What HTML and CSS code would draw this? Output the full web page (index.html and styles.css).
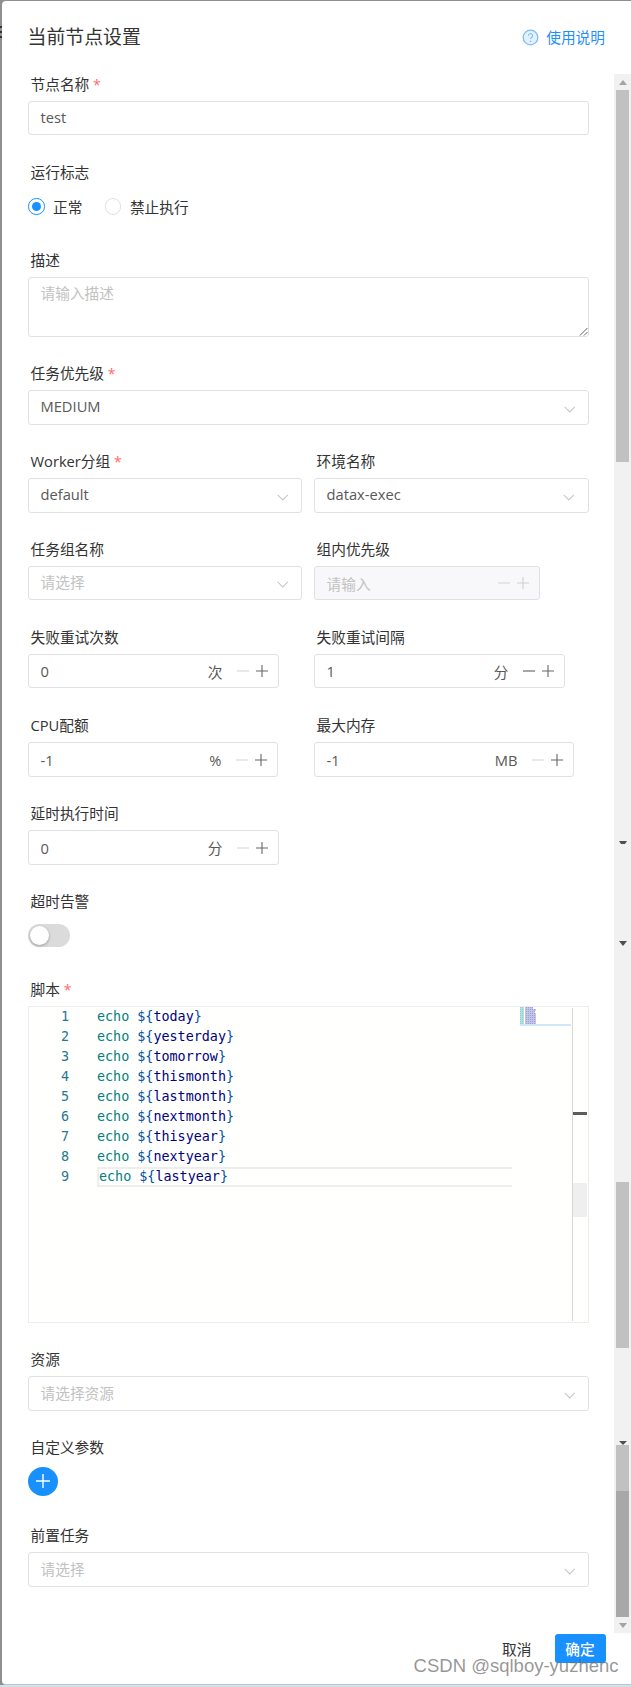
FILE: index.html
```html
<!DOCTYPE html>
<html lang="zh-CN">
<head>
<meta charset="utf-8">
<title>当前节点设置</title>
<link rel="stylesheet" href="styles.css">
</head>
<body>
<div class="backdrop">
  <div class="edge-marks"><span></span><span></span><span></span></div>
  <section class="dialog">
    <header class="head">
      <h1 class="title">当前节点设置</h1>
      <a class="help">
        <svg class="help-icon" viewBox="0 0 17 17"><circle cx="8.5" cy="8.5" r="7.3" fill="#e4f2ff" stroke="#7cbcfb" stroke-width="1.3"/><path d="M6.4 6.7a2.1 2.1 0 1 1 3.2 1.8c-.7.4-1.1.8-1.1 1.6" fill="none" stroke="#7cbcfb" stroke-width="1.1"/><circle cx="8.5" cy="12.3" r=".8" fill="#7cbcfb"/></svg>
        <span>使用说明</span>
      </a>
    </header>

    <form class="form">
      <div class="field">
        <div class="label">节点名称 <i class="star">*</i></div>
        <div class="box box-34 text-up value">test</div>
      </div>

      <div class="field">
        <div class="label">运行标志</div>
        <div class="radios">
          <span class="radio on"></span><span class="radio-text">正常</span>
          <span class="radio"></span><span class="radio-text">禁止执行</span>
        </div>
      </div>

      <div class="field">
        <div class="label">描述</div>
        <div class="box area placeholder">请输入描述
          <svg class="grip" viewBox="0 0 10 10"><path d="M1 9.5 9.5 1M5.5 9.5 9.5 5.5" stroke="#555" stroke-width="1" fill="none"/></svg>
        </div>
      </div>

      <div class="field">
        <div class="label">任务优先级 <i class="star">*</i></div>
        <div class="box select value">MEDIUM<svg class="chev" viewBox="0 0 12 7"><path d="M.7.7 6 6l5.3-5.3" fill="none" stroke="#c8c8c8" stroke-width="1.1"/></svg></div>
      </div>

      <div class="cols">
        <div class="field">
          <div class="label">Worker分组 <i class="star">*</i></div>
          <div class="box select value">default<svg class="chev" viewBox="0 0 12 7"><path d="M.7.7 6 6l5.3-5.3" fill="none" stroke="#c8c8c8" stroke-width="1.1"/></svg></div>
        </div>
        <div class="field">
          <div class="label">环境名称</div>
          <div class="box select value">datax-exec<svg class="chev" viewBox="0 0 12 7"><path d="M.7.7 6 6l5.3-5.3" fill="none" stroke="#c8c8c8" stroke-width="1.1"/></svg></div>
        </div>
      </div>

      <div class="cols">
        <div class="field">
          <div class="label">任务组名称</div>
          <div class="box select box-34 placeholder">请选择<svg class="chev" viewBox="0 0 12 7"><path d="M.7.7 6 6l5.3-5.3" fill="none" stroke="#c8c8c8" stroke-width="1.1"/></svg></div>
        </div>
        <div class="field">
          <div class="label">组内优先级</div>
          <div class="box num box-34 w-disabled disabled placeholder">
            <span class="num-text">请输入</span>
            <span class="steps">
              <svg class="step" viewBox="0 0 12 12"><path d="M0 6h12" stroke="#dcdcdc" stroke-width="1.3"/></svg>
              <svg class="step" viewBox="0 0 12 12"><path d="M0 6h12M6 0v12" stroke="#cfcfcf" stroke-width="1.1"/></svg>
            </span>
          </div>
        </div>
      </div>

      <div class="cols">
        <div class="field">
          <div class="label">失败重试次数</div>
          <div class="box num box-34 w-left value">
            <span class="num-text">0</span><span class="unit">次</span>
            <span class="steps">
              <svg class="step" viewBox="0 0 12 12"><path d="M0 6h12" stroke="#dcdcdc" stroke-width="1.3"/></svg>
              <svg class="step" viewBox="0 0 12 12"><path d="M0 6h12M6 0v12" stroke="#666" stroke-width="1.1"/></svg>
            </span>
          </div>
        </div>
        <div class="field">
          <div class="label">失败重试间隔</div>
          <div class="box num box-34 w-left value">
            <span class="num-text">1</span><span class="unit">分</span>
            <span class="steps">
              <svg class="step" viewBox="0 0 12 12"><path d="M0 6h12" stroke="#777" stroke-width="1.3"/></svg>
              <svg class="step" viewBox="0 0 12 12"><path d="M0 6h12M6 0v12" stroke="#666" stroke-width="1.1"/></svg>
            </span>
          </div>
        </div>
      </div>

      <div class="cols">
        <div class="field">
          <div class="label">CPU配额</div>
          <div class="box num w-cpu value">
            <span class="num-text">-1</span><span class="unit">%</span>
            <span class="steps">
              <svg class="step" viewBox="0 0 12 12"><path d="M0 6h12" stroke="#dcdcdc" stroke-width="1.3"/></svg>
              <svg class="step" viewBox="0 0 12 12"><path d="M0 6h12M6 0v12" stroke="#666" stroke-width="1.1"/></svg>
            </span>
          </div>
        </div>
        <div class="field">
          <div class="label">最大内存</div>
          <div class="box num w-mem value">
            <span class="num-text">-1</span><span class="unit">MB</span>
            <span class="steps">
              <svg class="step" viewBox="0 0 12 12"><path d="M0 6h12" stroke="#dcdcdc" stroke-width="1.3"/></svg>
              <svg class="step" viewBox="0 0 12 12"><path d="M0 6h12M6 0v12" stroke="#666" stroke-width="1.1"/></svg>
            </span>
          </div>
        </div>
      </div>

      <div class="cols">
        <div class="field">
          <div class="label">延时执行时间</div>
          <div class="box num w-left value">
            <span class="num-text">0</span><span class="unit">分</span>
            <span class="steps">
              <svg class="step" viewBox="0 0 12 12"><path d="M0 6h12" stroke="#dcdcdc" stroke-width="1.3"/></svg>
              <svg class="step" viewBox="0 0 12 12"><path d="M0 6h12M6 0v12" stroke="#666" stroke-width="1.1"/></svg>
            </span>
          </div>
        </div>
      </div>

      <div class="field">
        <div class="label">超时告警</div>
        <div class="switch-row"><span class="switch"><span class="knob"></span></span></div>
      </div>

      <div class="field">
        <div class="label">脚本 <i class="star">*</i></div>
        <div class="editor">
          <div class="gutter">
            <div>1</div><div>2</div><div>3</div><div>4</div><div>5</div><div>6</div><div>7</div><div>8</div><div>9</div>
          </div>
          <div class="code">
            <div class="line"><b class="k">echo</b> <b class="p">${</b>today<b class="p">}</b></div>
            <div class="line"><b class="k">echo</b> <b class="p">${</b>yesterday<b class="p">}</b></div>
            <div class="line"><b class="k">echo</b> <b class="p">${</b>tomorrow<b class="p">}</b></div>
            <div class="line"><b class="k">echo</b> <b class="p">${</b>thismonth<b class="p">}</b></div>
            <div class="line"><b class="k">echo</b> <b class="p">${</b>lastmonth<b class="p">}</b></div>
            <div class="line"><b class="k">echo</b> <b class="p">${</b>nextmonth<b class="p">}</b></div>
            <div class="line"><b class="k">echo</b> <b class="p">${</b>thisyear<b class="p">}</b></div>
            <div class="line"><b class="k">echo</b> <b class="p">${</b>nextyear<b class="p">}</b></div>
            <div class="line current"><b class="k">echo</b> <b class="p">${</b>lastyear<b class="p">}</b></div>
          </div>
          <div class="minimap">
            <svg class="mini-svg" viewBox="0 0 16 18">
              <defs>
                <pattern id="miniTeal" width="2" height="2" patternUnits="userSpaceOnUse"><rect width="2" height="2" fill="#b8e0de"/><rect width="1" height="1" fill="#8fcfcc"/></pattern>
                <pattern id="miniBlue" width="2" height="2" patternUnits="userSpaceOnUse"><rect width="2" height="2" fill="#c3c5e8"/><rect width="1" height="1" fill="#9c9fd6"/></pattern>
              </defs>
              <rect x="0" y="0" width="4" height="18" fill="url(#miniTeal)"/>
              <rect x="5" y="0" width="8" height="2" fill="url(#miniBlue)"/>
              <rect x="5" y="2" width="12" height="2" fill="url(#miniBlue)"/>
              <rect x="5" y="4" width="10" height="2" fill="url(#miniBlue)"/>
              <rect x="5" y="6" width="12" height="2" fill="url(#miniBlue)"/>
              <rect x="5" y="8" width="12" height="2" fill="url(#miniBlue)"/>
              <rect x="5" y="10" width="12" height="2" fill="url(#miniBlue)"/>
              <rect x="5" y="12" width="11" height="2" fill="url(#miniBlue)"/>
              <rect x="5" y="14" width="11" height="2" fill="url(#miniBlue)"/>
              <rect x="5" y="16" width="11" height="2" fill="url(#miniBlue)"/>
            </svg>
            <span class="mini-line"></span>
          </div>
          <div class="overview"><span class="ov-mark"></span><span class="ov-thumb"></span></div>
        </div>
      </div>

      <div class="field">
        <div class="label">资源</div>
        <div class="box select placeholder">请选择资源<svg class="chev" viewBox="0 0 12 7"><path d="M.7.7 6 6l5.3-5.3" fill="none" stroke="#c8c8c8" stroke-width="1.1"/></svg></div>
      </div>

      <div class="field">
        <div class="label">自定义参数</div>
        <div class="add-row">
          <span class="add"><svg class="add-icon" viewBox="0 0 14 14"><path d="M0 7h14M7 0v14" stroke="#fff" stroke-width="1.4"/></svg></span>
        </div>
      </div>

      <div class="field">
        <div class="label">前置任务</div>
        <div class="box select placeholder">请选择<svg class="chev" viewBox="0 0 12 7"><path d="M.7.7 6 6l5.3-5.3" fill="none" stroke="#c8c8c8" stroke-width="1.1"/></svg></div>
      </div>
    </form>

    <footer class="foot">
      <span class="cancel">取消</span>
      <span class="ok">确定</span>
    </footer>

    <div class="pagebar">
      <svg class="arrow arrow-up" viewBox="0 0 8 5"><path d="M4 0 8 5H0z" fill="#a3a3a3"/></svg>
      <span class="thumb thumb-a"></span>
      <svg class="arrow arrow-m1" viewBox="0 0 8 3"><path d="M0 0h8L6 3H2z" fill="#505050"/></svg>
      <svg class="arrow arrow-m2" viewBox="0 0 8 5"><path d="M0 0h8L4 5z" fill="#505050"/></svg>
      <span class="thumb thumb-b"></span>
      <svg class="arrow arrow-m3" viewBox="0 0 8 4"><path d="M0 0h8L4 4z" fill="#505050"/></svg>
      <span class="thumb thumb-c"></span>
      <span class="thumb thumb-d"></span>
      <svg class="arrow arrow-down" viewBox="0 0 8 5"><path d="M0 0h8L4 5z" fill="#a3a3a3"/></svg>
    </div>

    <div class="watermark">CSDN @sqlboy-yuzhenc</div>
  </section>
</div>
</body>
</html>
```

FILE: styles.css
```css
* { box-sizing: border-box; }
html, body { margin: 0; padding: 0; }
body {
  width: 631px;
  height: 1687px;
  overflow: hidden;
  background: #cfe3ea;
  font-family: "Open Sans", "Noto Sans CJK SC", sans-serif;
  font-size: 14.7px;
  color: #333;
}
.backdrop {
  position: relative;
  height: 1687px;
  background: #8f8f8f;
  border-bottom: 2px solid #cfe3ea;
}
.edge-marks {
  position: absolute;
  left: 0;
  top: 26px;
  width: 2px;
  display: flex;
  flex-direction: column;
  gap: 3px;
}
.edge-marks span { display: block; height: 2px; background: #333; }
.dialog {
  position: absolute;
  left: 2px;
  top: 1px;
  width: 629px;
  height: 1684px;
  background: #fff;
  border-radius: 4px 0 0 4px;
  border-bottom: 1px solid #c4c4c4;
}
.head {
  height: 68px;
  padding: 0 26px 0 25.5px;
  display: flex;
  justify-content: space-between;
  align-items: flex-start;
}
.title {
  margin: 20px 0 0;
  font-size: 18.9px;
  font-weight: 400;
  line-height: 32px;
  color: #333;
}
.help {
  margin-top: 20px;
  display: flex;
  align-items: center;
  gap: 7px;
  color: #1f90fb;
  font-size: 14.7px;
  line-height: 32px;
}
.help-icon { width: 17px; height: 17px; }
.form {
  padding: 0 42px 0 26px;
  display: flex;
  flex-direction: column;
  gap: 21px;
}
.field { display: flex; flex-direction: column; min-width: 0; }
.label {
  height: 32px;
  line-height: 30px;
  padding-left: 2.5px;
  color: #333;
  white-space: nowrap;
}
.star { color: #ff6b6d; font-style: normal; font-size: 14px; }
.box {
  position: relative;
  height: 35px;
  border: 1px solid #e0e0e6;
  border-radius: 3px;
  background: #fff;
  display: flex;
  align-items: center;
  padding: 0 11.5px;
}
.box-34 { height: 34px; margin-bottom: 1px; }
.text-up { padding-bottom: 2px; }
.value { color: #595959; }
.placeholder { color: #c2c2c2; }
.area {
  height: 60px;
  align-items: flex-start;
  padding-top: 3px;
  line-height: 24px;
}
.grip { position: absolute; right: 0; bottom: 0; width: 9px; height: 9px; }
.select { justify-content: space-between; padding-bottom: 3px; }
.chev { width: 11.5px; height: 7px; flex: none; margin: 6px 1.5px 0 0; }
.radios { height: 35px; display: flex; align-items: center; }
.radio {
  width: 16.5px;
  height: 16.5px;
  border-radius: 50%;
  border: 1px solid #e0e0e6;
  flex: none;
  position: relative;
}
.radio.on { border-color: #1890ff; }
.radio.on::after {
  content: "";
  position: absolute;
  left: 2.75px;
  top: 2.75px;
  width: 9px;
  height: 9px;
  border-radius: 50%;
  background: #1890ff;
}
.radio-text { margin: 0 22.5px 0 8.5px; color: #333; }
.cols { display: grid; grid-template-columns: 274px 274.5px; gap: 0 12px; }
.num { padding-right: 10.5px; }
.num-text { flex: 1; }
.unit { margin-right: 14px; color: #595959; }
.w-left { width: 251px; }
.w-cpu { width: 250px; }
.w-mem { width: 260px; }
.w-disabled { width: 226px; background: #f8f8fa; }
.steps { display: flex; gap: 7px; }
.step { width: 12px; height: 12px; display: block; }
.switch-row { height: 35px; display: flex; align-items: center; }
.switch {
  position: relative;
  display: block;
  width: 41.5px;
  height: 23px;
  border-radius: 12px;
  background: #dbdbdb;
}
.knob {
  position: absolute;
  left: 2px;
  top: 2px;
  width: 19px;
  height: 19px;
  border-radius: 50%;
  background: #fff;
  box-shadow: 0 1px 3px rgba(0,0,0,.3);
}
.editor {
  position: relative;
  height: 317px;
  border: 1px solid #ededed;
  background: #fffffd;
  display: flex;
  font-family: "DejaVu Sans Mono", "Liberation Mono", monospace;
  font-size: 13.4px;
  line-height: 20px;
}
.gutter {
  width: 68px;
  flex: none;
  text-align: right;
  color: #237893;
}
.gutter div { padding-right: 28px; }
.code { width: 415px; flex: none; color: #000080; }
.line { height: 20px; white-space: pre; }
.line.current {
  border: 2px solid #eeeeee;
  border-right: 0;
  line-height: 16px;
}
.line b { font-weight: 400; }
.k { color: #008080; }
.p { color: #0451a5; }
.minimap { position: absolute; left: 491px; top: 0; width: 51px; height: 20px; }
.mini-svg { display: block; width: 16px; height: 18px; }
.mini-line {
  position: absolute;
  left: 0;
  right: 0;
  top: 16.5px;
  height: 2px;
  background: #cfe6fb;
}
.overview {
  position: absolute;
  top: 1px;
  right: 0;
  bottom: 1px;
  width: 16px;
  border-left: 1px solid #d8d8d8;
}
.ov-mark {
  position: absolute;
  left: 0;
  right: 1px;
  top: 104px;
  height: 2.5px;
  background: #5c5c5c;
}
.ov-thumb {
  position: absolute;
  left: 0;
  right: 1px;
  top: 175px;
  height: 34px;
  background: #efefef;
}
.add-row { height: 35px; display: flex; align-items: center; padding-bottom: 1px; }
.add {
  width: 30px;
  height: 29px;
  border-radius: 50%;
  background: #1890ff;
  display: flex;
  align-items: center;
  justify-content: center;
}
.add-icon { width: 14px; height: 14px; display: block; }
.foot {
  position: absolute;
  right: 25.5px;
  top: 1633px;
  display: flex;
  align-items: center;
  gap: 23px;
}
.cancel { color: #333; }
.ok {
  width: 51px;
  height: 29px;
  border-radius: 3px;
  background: #1890ff;
  color: #fff;
  display: flex;
  align-items: center;
  justify-content: center;
  font-weight: 500;
}
.pagebar {
  position: absolute;
  right: 0;
  top: 72.5px;
  width: 17px;
  height: 1559.5px;
  background: #f1f1f1;
}
.thumb { position: absolute; left: 2px; width: 13px; background: #c1c1c1; }
.thumb-a { top: 16.5px; height: 372px; }
.thumb-b { top: 1108.5px; height: 166px; }
.thumb-c { top: 1371.5px; height: 46px; }
.thumb-d { top: 1417.5px; height: 126px; background: #a8a8a8; }
.arrow { position: absolute; left: 4.5px; width: 8px; display: block; }
.arrow-up { top: 6.5px; height: 5px; }
.arrow-m1 { top: 767.5px; height: 3px; }
.arrow-m2 { top: 867.5px; height: 5px; }
.arrow-m3 { top: 1367px; height: 4px; }
.arrow-down { top: 1549.5px; height: 5px; }
.watermark {
  position: absolute;
  right: 12.5px;
  top: 1652px;
  font-family: "Liberation Sans", Arial, sans-serif;
  font-size: 18.5px;
  line-height: 26px;
  color: rgba(110,110,110,.72);
  white-space: nowrap;
}
```
